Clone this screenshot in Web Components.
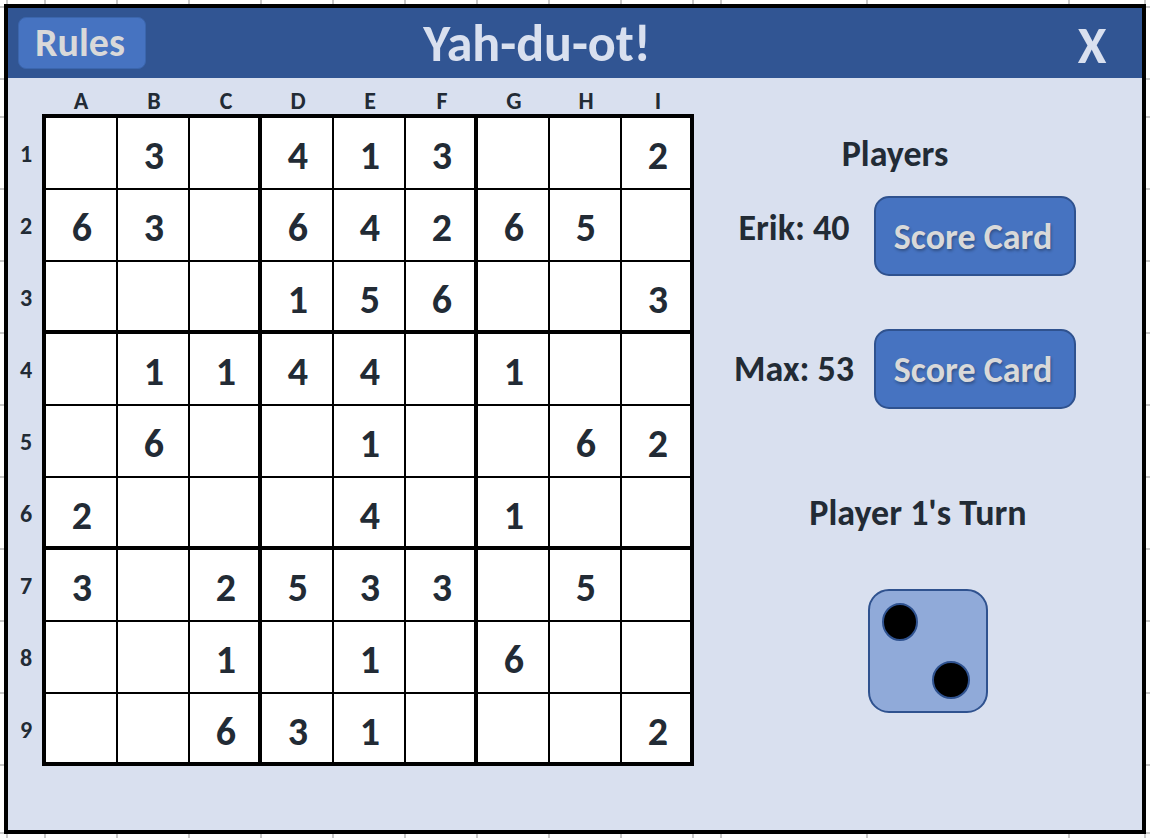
<!DOCTYPE html>
<html lang="en">
<head>
<meta charset="utf-8">
<title>Yah-du-ot!</title>
<style>
  :root {
    --ink: #222b35;
    --panel: #d9e0ef;
    --bar: #315593;
    --button: #4673c1;
    --edge: #2f528f;
    --grid: #c9c9c9;
  }
  html { height: 100%; }
  body {
    margin: 0;
    font-family: Carlito, Lato, "Open Sans", sans-serif;
    font-weight: 700;
    color: var(--ink);
  }
</style>
</head>
<body>
<yah-game></yah-game>
<script>
const define = (name, html, setup) => customElements.define(name, class extends HTMLElement {
  constructor() {
    super();
    const t = document.createElement('template');
    t.innerHTML = html;
    this.attachShadow({ mode: 'open' }).append(t.content.cloneNode(true));
  }
  connectedCallback() { if (setup) setup(this, this.shadowRoot); }
});

define('game-button', `
<style>
  :host { display: block; }
  button {
    display: block; box-sizing: border-box; width: 100%; height: 80px; margin: 0; padding: 2px 4px 0 0;
    border: 2px solid var(--edge); border-radius: 15px;
    background: var(--button); color: #d9d9d9;
    font: inherit; font-size: 36px; line-height: 40px; white-space: nowrap;
    text-shadow: 1px 2px 3px rgba(0,0,0,.3); cursor: pointer;
  }
  :host([compact]) button {
    height: 52px; padding: 0 4px 0 0; border: 1px solid #3b66ad; border-radius: 8px; font-size: 40px; text-shadow: none;
  }
</style>
<button type="button"><slot></slot></button>`);

define('title-bar', `
<style>
  :host {
    display: grid; grid-template-columns: 128px 1fr 204px; align-items: center;
    box-sizing: border-box; height: 70px; padding: 0 10px; background: var(--bar); color: var(--panel);
  }
  h1 { margin: 0; font-size: 52px; line-height: 56px; text-align: center; }
  .close {
    justify-self: end; width: 80px;
    border: 0; background: none; padding: 4px 0 0; margin: 0; color: inherit;
    font: inherit; font-size: 52px; line-height: 56px; cursor: pointer;
  }
</style>
<game-button compact>Rules</game-button>
<h1><slot></slot></h1>
<button class="close" type="button" aria-label="Close">X</button>`);

define('game-board', `
<style>
  :host { display: block; flex: none; }
  table { border-collapse: separate; border-spacing: 0; table-layout: fixed; width: 686px; }
  th, td { box-sizing: border-box; padding: 0; text-align: center; vertical-align: middle; }
  th { font-size: 24px; line-height: 24px; padding-left: 2px; }
  thead th { height: 36px; padding: 10px 0 0; }
  thead th:nth-child(2) { padding-left: 2px; }
  col.rows { width: 34px; }
  col.first { width: 76px; }
  tbody th, td { height: 72px; }
  td {
    background: #fff; font-size: 40px; line-height: 40px; padding: 6px 0 0 2px;
    border: 0 solid #000; border-width: 0 2px 2px 0;
  }
  td:nth-of-type(3n) { border-right-width: 4px; padding-left: 4px; }
  tr:nth-child(3n) td { border-bottom-width: 4px; padding-top: 8px; }
  td:first-of-type { border-left-width: 4px; }
  tbody tr:first-child td { border-top-width: 4px; }
  tbody tr:first-child :is(th, td) { height: 76px; }
  tbody tr:first-child th { padding-top: 4px; }
</style>
<table aria-label="Board">
  <colgroup><col class="rows"><col class="first"><col span="8"></colgroup>
  <thead><tr></tr></thead>
  <tbody></tbody>
</table>`, (el, root) => {
  const rows = [' 3 413  2', '63 64265 ', '   156  3', ' 1144 1  ', ' 6  1  62',
                '2   4 1  ', '3 2533 5 ', '  1 1 6  ', '  631   2'];
  root.querySelector('thead tr').innerHTML =
    '<th></th>' + [...'ABCDEFGHI'].map(c => `<th scope="col">${c}</th>`).join('');
  root.querySelector('tbody').innerHTML = rows.map((r, i) =>
    `<tr><th scope="row">${i + 1}</th>${[...r].map(c => `<td>${c.trim()}</td>`).join('')}</tr>`).join('');
});

define('player-row', `
<style>
  :host { display: grid; grid-template-columns: 160px 202px; align-items: center; }
  span { font-size: 36px; line-height: 40px; text-align: center; white-space: nowrap; }
  :host([raised]) span { padding-bottom: 16px; }
</style>
<span><slot></slot></span>
<game-button>Score Card</game-button>`);

define('game-die', `
<style>
  :host { display: block; width: 120px; }
  svg { display: block; width: 100%; height: auto; }
</style>
<svg viewBox="0 0 120 124" role="img" aria-label="Die showing two">
  <rect x="1" y="1" width="118" height="122" rx="20" fill="#90aad9" stroke="#2f528f" stroke-width="2"/>
  <g stroke="#2f528f" stroke-width="2">
    <ellipse cx="32" cy="33" rx="17" ry="18"/>
    <circle cx="83" cy="91" r="18"/>
  </g>
</svg>`);

define('side-panel', `
<style>
  :host { display: block; flex: 1; min-width: 410px; }
  h2, p { margin: 0; font-size: 36px; line-height: 40px; font-weight: inherit; text-align: center; }
  .players { display: flex; flex-direction: column; align-items: center; padding: 56px 46px 0 0; }
  .list { display: grid; gap: 53px; padding-top: 22px; }
  .turn { display: flex; flex-direction: column; align-items: center; padding-top: 84px; }
  game-die { padding: 56px 0 0 20px; }
</style>
<section class="players">
  <h2>Players</h2>
  <div class="list">
    <player-row raised>Erik: 40</player-row>
    <player-row>Max: 53</player-row>
  </div>
</section>
<section class="turn">
  <p>Player 1's Turn</p>
  <game-die></game-die>
</section>`);

define('yah-game', `
<style>
  :host {
    --v: linear-gradient(var(--grid), var(--grid));
    display: flex; box-sizing: border-box; min-height: 100vh; padding: 4px;
    background:
      repeating-linear-gradient(90deg, var(--grid) 0 2px, transparent 2px 72px) 44px 0 / 650px 100% no-repeat,
      repeating-linear-gradient(var(--grid) 0 2px, transparent 2px 72px) 0 116px / 100% 650px no-repeat,
      var(--v) 6px 0 / 2px 100% no-repeat,
      var(--v) 720px 0 / 2px 100% no-repeat,
      var(--v) 866px 0 / 2px 100% no-repeat,
      var(--v) 1068px 0 / 2px 100% no-repeat,
      var(--v) 1144px 0 / 2px 100% no-repeat,
      var(--v) 0 6px / 100% 2px no-repeat,
      var(--v) 0 78px / 100% 2px no-repeat,
      var(--v) 0 832px / 100% 2px no-repeat,
      #fff;
  }
  .window { flex: 1; border: 4px solid #000; background: var(--panel); }
  main { display: flex; }
</style>
<div class="window">
  <title-bar>Yah-du-ot!</title-bar>
  <main>
    <game-board></game-board>
    <side-panel></side-panel>
  </main>
</div>`);
</script>
</body>
</html>
